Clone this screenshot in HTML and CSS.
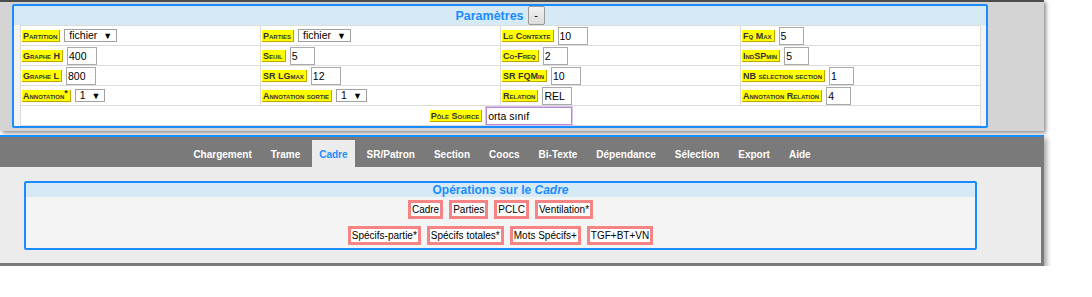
FILE: index.html
```html
<!DOCTYPE html>
<html lang="fr">
<head>
    <meta charset="UTF-8">
    <meta name="viewport" content="width=device-width, initial-scale=1.0">
    <title>Cadre - Opérations</title>
    <link rel="stylesheet" href="styles.css">
</head>
<body>
    <!-- Paramètres -->
    <div class="top-panel">
        <div class="box params">
            <div class="box-head">
                <span class="box-title">Paramètres</span>
                <button class="toggle">-</button>
            </div>
            <table class="param-table">
                <tr>
                    <td><div class="field"><span class="lbl">Partition</span><span class="select">fichier <span class="arrow">▼</span></span></div></td>
                    <td><div class="field"><span class="lbl">Parties</span><span class="select">fichier <span class="arrow">▼</span></span></div></td>
                    <td><div class="field"><span class="lbl">Lg Contexte</span><input class="num w-m" type="text" value="10"></div></td>
                    <td><div class="field"><span class="lbl">Fq Max</span><input class="num w-s" type="text" value="5"></div></td>
                </tr>
                <tr>
                    <td><div class="field"><span class="lbl">Graphe H</span><input class="num w-m" type="text" value="400"></div></td>
                    <td><div class="field"><span class="lbl">Seuil</span><input class="num w-s" type="text" value="5"></div></td>
                    <td><div class="field"><span class="lbl">Co-Freq</span><input class="num w-s" type="text" value="2"></div></td>
                    <td><div class="field"><span class="lbl">IndSPmin</span><input class="num w-s" type="text" value="5"></div></td>
                </tr>
                <tr>
                    <td><div class="field"><span class="lbl">Graphe L</span><input class="num w-m" type="text" value="800"></div></td>
                    <td><div class="field"><span class="lbl">SR LGmax</span><input class="num w-m" type="text" value="12"></div></td>
                    <td><div class="field"><span class="lbl">SR FQMin</span><input class="num w-m" type="text" value="10"></div></td>
                    <td><div class="field"><span class="lbl">NB sélection section</span><input class="num w-s" type="text" value="1"></div></td>
                </tr>
                <tr>
                    <td><div class="field"><span class="lbl">Annotation<sup>*</sup></span><span class="select">1 <span class="arrow">▼</span></span></div></td>
                    <td><div class="field"><span class="lbl">Annotation sortie</span><span class="select">1 <span class="arrow">▼</span></span></div></td>
                    <td><div class="field"><span class="lbl">Relation</span><input class="num w-m" type="text" value="REL"></div></td>
                    <td><div class="field"><span class="lbl">Annotation Relation</span><input class="num w-s" type="text" value="4"></div></td>
                </tr>
                <tr>
                    <td colspan="4"><div class="field centered"><span class="lbl">Pôle Source</span><input class="num w-src focused" type="text" value="orta sınıf"></div></td>
                </tr>
            </table>
        </div>
    </div>

    <!-- Onglets + opérations -->
    <div class="main-panel">
        <div class="menu-bar">
            <ul class="menu">
                <li><a href="#">Chargement</a></li>
                <li><a href="#">Trame</a></li>
                <li class="active"><a href="#">Cadre</a></li>
                <li><a href="#">SR/Patron</a></li>
                <li><a href="#">Section</a></li>
                <li><a href="#">Coocs</a></li>
                <li><a href="#">Bi-Texte</a></li>
                <li><a href="#">Dépendance</a></li>
                <li><a href="#">Sélection</a></li>
                <li><a href="#">Export</a></li>
                <li><a href="#">Aide</a></li>
            </ul>
        </div>
        <div class="content">
            <div class="box ops">
                <div class="box-head small">
                    <span class="box-title">Opérations sur le <i>Cadre</i></span>
                </div>
                <div class="ops-row">
                    <button class="op">Cadre</button>
                    <button class="op">Parties</button>
                    <button class="op">PCLC</button>
                    <button class="op">Ventilation*</button>
                </div>
                <div class="ops-row">
                    <button class="op">Spécifs-partie*</button>
                    <button class="op">Spécifs totales*</button>
                    <button class="op">Mots Spécifs+</button>
                    <button class="op">TGF+BT+VN</button>
                </div>
            </div>
        </div>
    </div>
</body>
</html>
```

FILE: styles.css
```css
body {
    margin: 0;
    font-family: "Liberation Sans", Arial, sans-serif;
    background-color: #fff;
    color: #000;
}

/* panneaux gris */
.top-panel {
    width: 1044px;
    box-sizing: border-box;
    background-color: #d4d4d4;
    border-top: 2px solid #4d4d4d;
    padding: 2px 0 3px 12px;
    box-shadow: 2px 2px 4px rgba(0, 0, 0, 0.45);
}

.main-panel {
    width: 1044px;
    box-sizing: border-box;
    margin-top: 4px;
    border-top: 2px solid #1a8cff;
    border-right: 3px solid #7a7a7a;
    border-bottom: 3px solid #7a7a7a;
    box-shadow: 3px 3px 5px rgba(0, 0, 0, 0.35);
}

/* boîtes bleues */
.box {
    background-color: #f4f4f4;
    border: 2px solid #1a8cff;
    border-radius: 2px;
    box-sizing: border-box;
}

.params {
    width: 976px;
}

.box-head {
    display: flex;
    justify-content: center;
    align-items: center;
    gap: 4px;
    height: 19px;
    background-color: #d6eaf5;
}

.box-head.small {
    height: 14px;
}

.box-title {
    color: #1a8cff;
    font-weight: bold;
    font-size: 12.5px;
}

.box-head.small .box-title {
    font-size: 12px;
}

.toggle {
    height: 19px;
    width: 17px;
    margin-top: -1px;
    padding: 0;
    font-family: "Liberation Sans", Arial, sans-serif;
    font-size: 11px;
    background: linear-gradient(#f2f2f2, #dcdcdc);
    border: 1px solid #9a9a9a;
    border-radius: 2px;
    color: #000;
}

/* table des paramètres */
.param-table {
    width: 961px;
    margin: 0 6px;
    border-collapse: collapse;
    table-layout: fixed;
    background-color: #fff;
}

.param-table td {
    height: 19px;
    padding: 0 0 0 1px;
    border: 1px solid #dcdcdc;
}

.field {
    display: flex;
    align-items: center;
    gap: 4px;
}

.field.centered {
    justify-content: center;
}

.lbl {
    background-color: #ffff00;
    color: #333;
    font-size: 9px;
    font-weight: bold;
    font-variant: small-caps;
    line-height: 10px;
    padding: 1px 2px 0 1px;
    border-right: 1px solid #c4a400;
    border-bottom: 1px solid #c4a400;
    white-space: nowrap;
}

.lbl sup {
    font-size: 9px;
    line-height: 0;
    vertical-align: 3px;
}

.num {
    height: 18px;
    box-sizing: border-box;
    border: 1px solid #a9a9a9;
    padding: 0 1px;
    font-family: "Liberation Sans", Arial, sans-serif;
    font-size: 10.5px;
    color: #000;
    background-color: #fff;
}

.w-s { width: 25px; }
.w-m { width: 30px; }
.w-src { width: 86px; }

.num.focused {
    border-color: #b88ad0;
    outline: 1px solid #d9c4ec;
}

.select {
    display: inline-block;
    height: 13px;
    line-height: 11px;
    box-sizing: border-box;
    border: 1px solid #a0a0a0;
    background-color: #fff;
    padding: 0 4px;
    font-size: 10.5px;
    white-space: nowrap;
}

.select .arrow {
    font-size: 9px;
    margin-left: 3px;
}

/* onglets */
.menu-bar {
    height: 30px;
    background-color: #7a7a7a;
}

.menu {
    display: flex;
    justify-content: center;
    align-items: flex-end;
    gap: 5px;
    width: 1004px;
    height: 30px;
    margin: 0;
    padding: 0;
    list-style: none;
}

.menu a {
    display: block;
    height: 27px;
    line-height: 29px;
    padding: 0 7px;
    color: #fff;
    font-size: 10px;
    font-weight: bold;
    text-decoration: none;
}

.menu li.active a {
    background-color: #ececec;
    color: #1a8cff;
}

/* opérations */
.content {
    background-color: #ececec;
    padding: 14px 0 13px 24px;
}

.ops {
    width: 953px;
    padding-bottom: 3px;
}

.ops-row {
    display: flex;
    justify-content: center;
    gap: 6px;
    margin-top: 3px;
}

.ops-row + .ops-row {
    margin-top: 7px;
}

.op {
    height: 19px;
    box-sizing: border-box;
    padding: 0 1px;
    background-color: #fff;
    border: 3px solid #f58585;
    font-family: "Liberation Sans", Arial, sans-serif;
    font-size: 10px;
    color: #000;
    cursor: pointer;
}
```
